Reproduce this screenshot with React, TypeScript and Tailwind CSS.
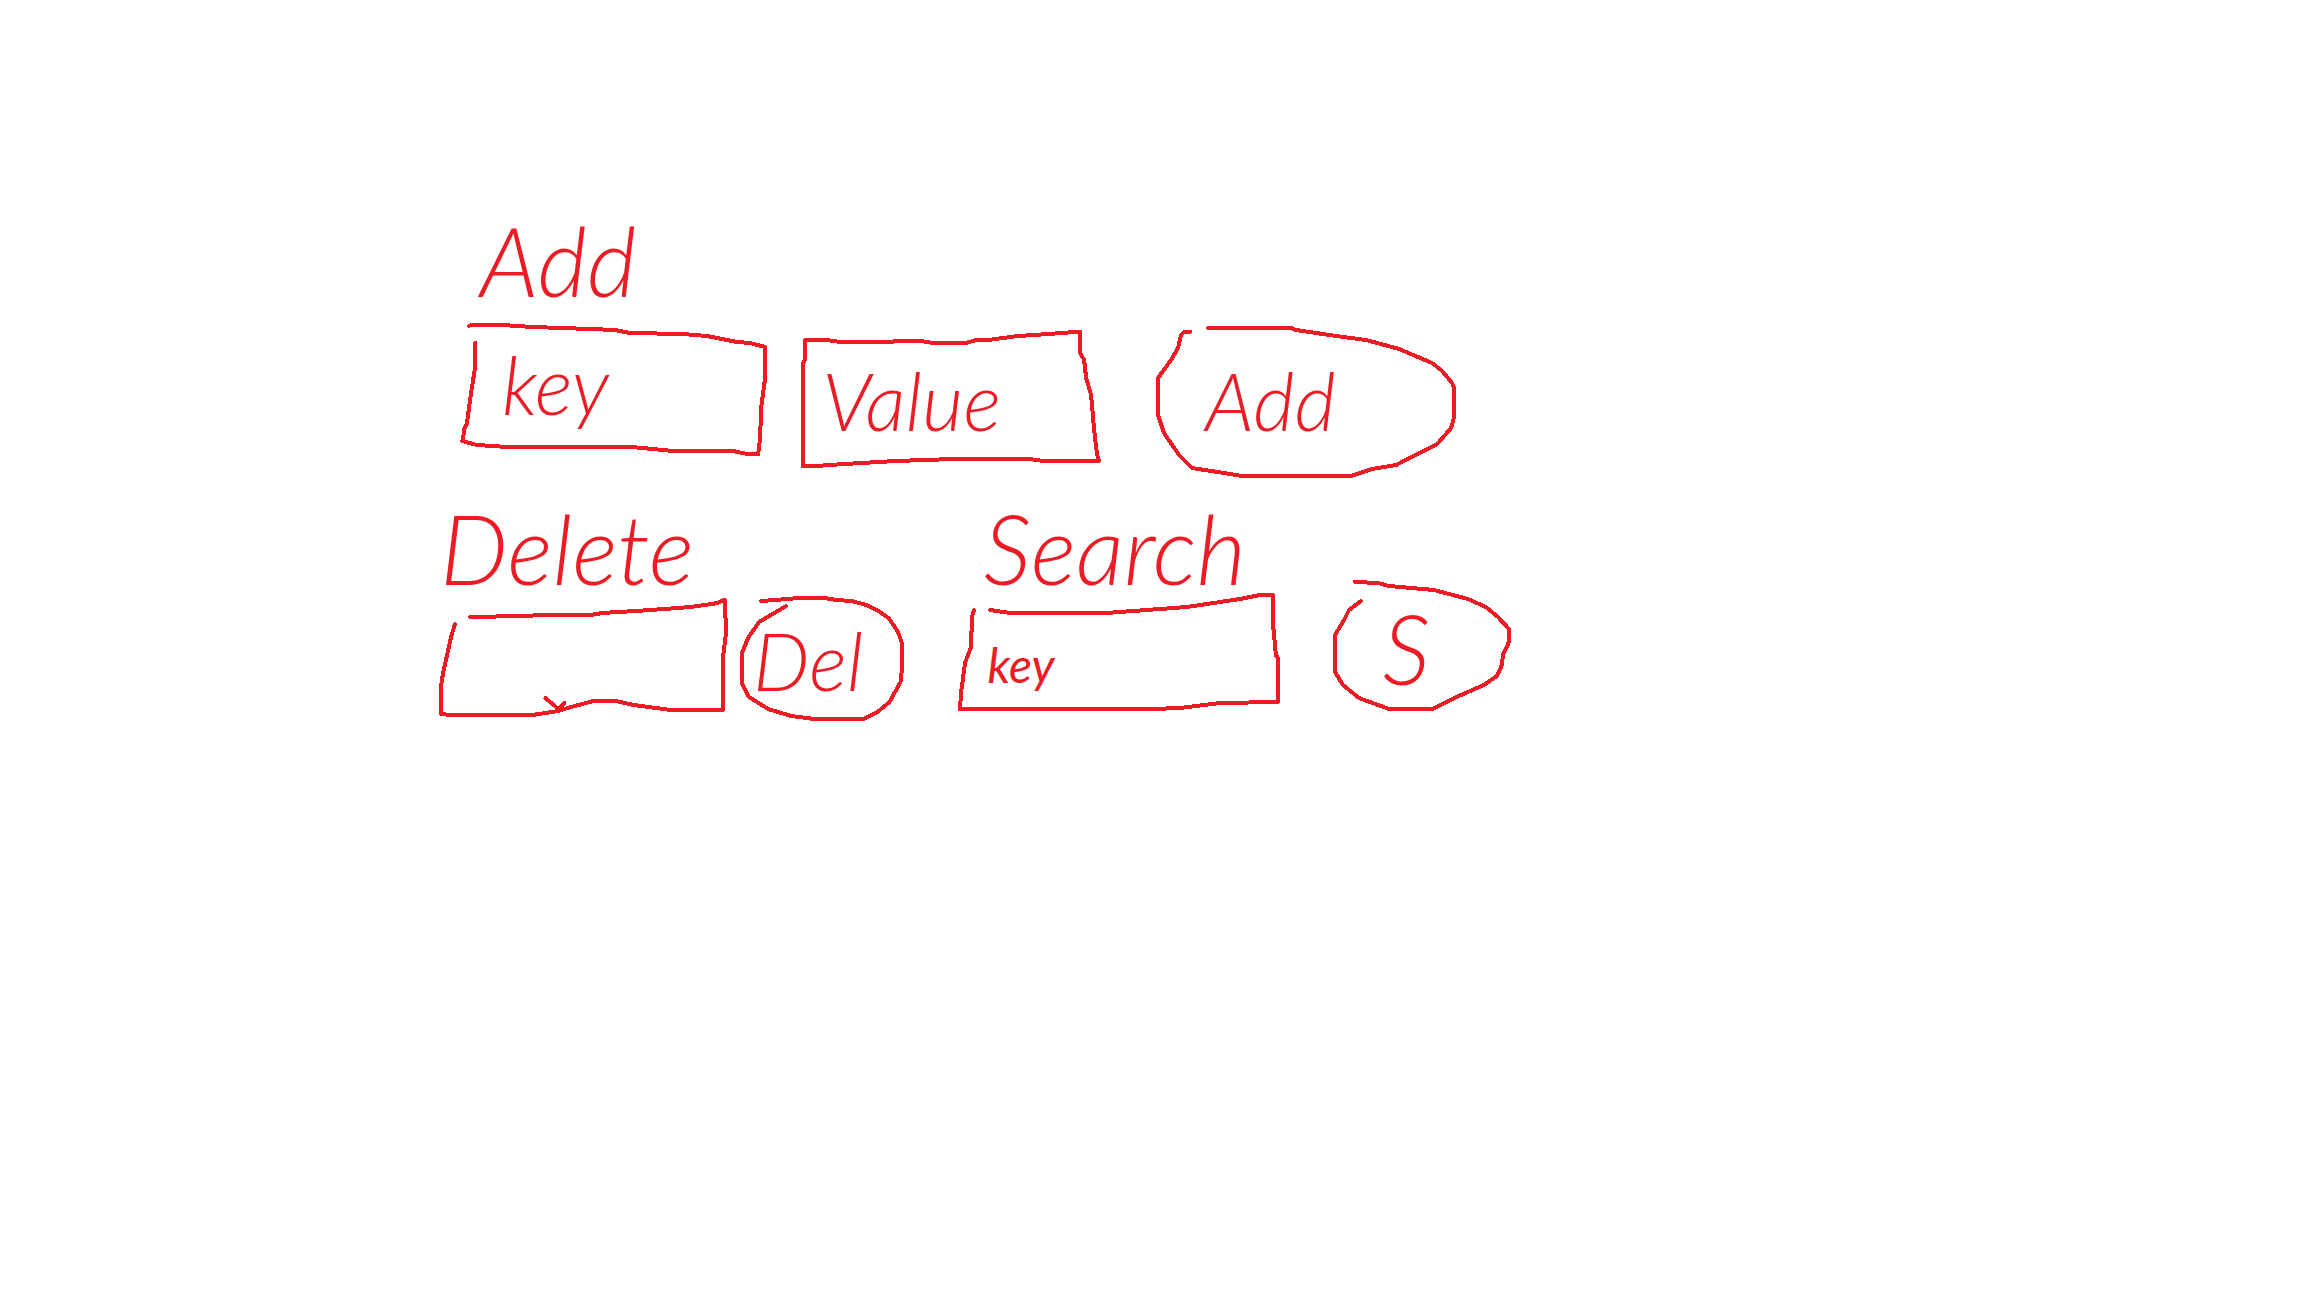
import type { ReactNode } from "react";

type OutlineProps = { viewBox: string; points: string[] };

/* Freehand stroke drawn behind a control; it stretches with the control. */
function Outline({ viewBox, points }: OutlineProps) {
  return (
    <svg
      aria-hidden="true"
      viewBox={viewBox}
      preserveAspectRatio="none"
      shapeRendering="crispEdges"
      className="pointer-events-none absolute inset-0 size-full overflow-visible fill-none stroke-[#ed1c24] stroke-4"
    >
      {points.map((p) => (
        <polyline key={p} points={p} strokeLinecap="round" strokeLinejoin="round" vectorEffect="non-scaling-stroke" />
      ))}
    </svg>
  );
}

function Sketch({ className, outline, children }: { className: string; outline: OutlineProps; children: ReactNode }) {
  return (
    <div className={`relative min-w-0 ${className}`}>
      <Outline {...outline} />
      {children}
    </div>
  );
}

const field =
  "relative block size-full bg-transparent leading-none outline-none placeholder:text-[#ed1c24] placeholder:opacity-100";
const action = "relative block size-full cursor-pointer bg-transparent text-left leading-none";

const outlines = {
  key: {
    viewBox: "462 324 304 152",
    points: [
      "469,326 471,325 502,325 533,327 590,329 615,330 630,333 683,334 707,336 737,342 750,343 765,347 765,378 761,408 760,438 758,454 747,454 733,451 673,451 632,447 507,447 477,445 462,441",
      "475,343 475,368 470,400 467,423 464,430 463,441",
    ],
  },
  value: {
    viewBox: "801 324 299 152",
    points: [
      "804,340 825,340 840,342 888,342 897,341 920,341 932,343 965,343 975,340 987,340 1017,336 1048,334 1073,332 1079,332 1079,353 1083,360 1085,378 1090,395 1093,430 1096,455 1098,461 1043,461 1028,459 953,459 895,461 843,464 815,466 802,466 802,363 804,360 804,340",
    ],
  },
  add: {
    viewBox: "1158 324 298 152",
    points: [
      "1209,328 1292,328 1297,330 1337,336 1367,340 1400,349 1433,363 1443,371 1453,383 1455,388 1455,417 1452,428 1438,444 1397,465 1373,469 1352,476 1243,476 1225,473 1193,468 1180,455 1165,433 1159,415 1159,378 1172,360 1179,348 1182,335 1185,332 1191,332",
    ],
  },
  deleteKey: {
    viewBox: "440 596 286 128",
    points: [
      "470,617 523,616 543,615 590,615 602,613 650,610 690,607 717,603 722,600 724,600 725,633 722,657 722,710 670,710 633,705 615,701 593,701 567,708 558,711 532,715 451,715 441,714 441,687 443,673 446,660 451,637 455,624",
      "545,698 558,709 564,703",
    ],
  },
  del: {
    viewBox: "740 596 162 128",
    points: [
      "760,601 787,599 797,598 823,598 835,600 850,601 865,605 877,611 887,618 892,625 897,633 900,642 901,663 899,682 888,702 876,712 862,719 813,719 790,716 767,709 748,697 741,684 741,653 747,638 758,622 785,606",
    ],
  },
  searchKey: {
    viewBox: "960 596 319 128",
    points: [
      "990,610 1010,613 1107,613 1133,611 1187,607 1240,599 1260,595 1273,595 1273,623 1276,655 1278,658 1278,702 1220,703 1180,708 1153,709 960,709 961,693 965,663 971,647 972,617 974,610",
    ],
  },
  search: {
    viewBox: "1333 596 177 128",
    points: [
      "1354,582 1377,583 1388,586 1433,590 1467,599 1485,607 1497,617 1508,629 1508,642 1502,655 1501,665 1496,676 1483,685 1460,695 1432,709 1388,709 1358,698 1342,685 1334,672 1334,635 1343,620 1348,610 1360,601",
    ],
  },
};

export default function App() {
  return (
    <main className="min-h-screen bg-white pt-53 font-['Lato',sans-serif] font-light text-[#ed1c24] italic">
      <div className="ml-[19.1%] w-[46.5%]">
        <form onSubmit={(e) => e.preventDefault()}>
          <h2 className="pl-10 text-8xl leading-none">Add</h2>
          <div className="mt-4 flex h-38 gap-9 pr-14 pl-5.5">
            <Sketch className="flex-[304]" outline={outlines.key}>
              <input aria-label="Key" placeholder="key" className={`${field} pb-8 pl-10 text-[80px]`} />
            </Sketch>
            <Sketch className="flex-[299]" outline={outlines.value}>
              <input aria-label="Value" placeholder="Value" className={`${field} pl-5 text-[80px]`} />
            </Sketch>
            <Sketch className="ml-5 flex-[298]" outline={outlines.add}>
              <button type="submit" className={`${action} pl-12 text-[80px]`}>
                Add
              </button>
            </Sketch>
          </div>
        </form>

        <div className="mt-6 flex gap-14">
          <form className="min-w-0 flex-[462]" onSubmit={(e) => e.preventDefault()}>
            <label htmlFor="delete-key" className="block text-8xl leading-none">
              Delete
            </label>
            <div className="flex h-32 gap-3.5">
              <Sketch className="flex-[286]" outline={outlines.deleteKey}>
                <input id="delete-key" className={`${field} px-8 text-5xl`} />
              </Sketch>
              <Sketch className="flex-[162]" outline={outlines.del}>
                <button type="submit" className={`${action} pl-3 text-[80px]`}>
                  Del
                </button>
              </Sketch>
            </div>
          </form>

          <form className="min-w-0 flex-[550]" onSubmit={(e) => e.preventDefault()}>
            <label htmlFor="search-key" className="block pl-6 text-8xl leading-none">
              Search
            </label>
            <div className="flex h-32 gap-14">
              <Sketch className="flex-[319]" outline={outlines.searchKey}>
                <input id="search-key" placeholder="key" className={`${field} pt-2 pl-7 text-5xl font-normal`} />
              </Sketch>
              <Sketch className="flex-[177]" outline={outlines.search}>
                <button type="submit" aria-label="S, search" className={`${action} pb-6 pl-12 text-8xl`}>
                  S
                </button>
              </Sketch>
            </div>
          </form>
        </div>
      </div>
    </main>
  );
}
